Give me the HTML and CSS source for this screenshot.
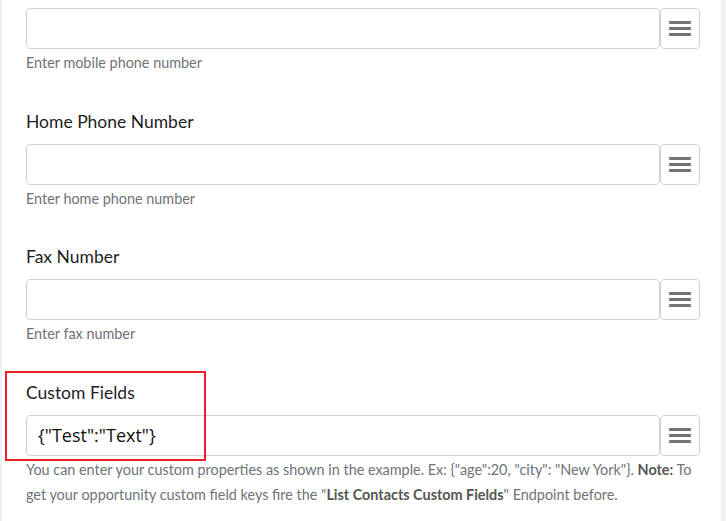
FILE: index.html
```
<!DOCTYPE html>
<html lang="en">
<head>
    <meta charset="UTF-8">
    <title>Contact Fields</title>
    <link rel="stylesheet" href="styles.css">
</head>
<body>
    <div class="page">
        <div class="panel">

            <!-- Mobile phone (label scrolled out of view) -->
            <div class="field first">
                <div class="input-row">
                    <input type="text" class="field-input">
                    <button class="menu-btn" type="button"><span></span><span></span><span></span></button>
                </div>
                <p class="help">Enter mobile phone number</p>
            </div>

            <div class="field">
                <label class="field-label">Home Phone Number</label>
                <div class="input-row">
                    <input type="text" class="field-input">
                    <button class="menu-btn" type="button"><span></span><span></span><span></span></button>
                </div>
                <p class="help">Enter home phone number</p>
            </div>

            <div class="field">
                <label class="field-label">Fax Number</label>
                <div class="input-row">
                    <input type="text" class="field-input">
                    <button class="menu-btn" type="button"><span></span><span></span><span></span></button>
                </div>
                <p class="help">Enter fax number</p>
            </div>

            <div class="field highlighted">
                <div class="highlight-box"></div>
                <label class="field-label">Custom Fields</label>
                <div class="input-row">
                    <input type="text" class="field-input filled" value='{"Test":"Text"}'>
                    <button class="menu-btn" type="button"><span></span><span></span><span></span></button>
                </div>
                <p class="help">You can enter your custom properties as shown in the example. Ex: {"age":20, "city": "New York"}. <b>Note:</b> To get your opportunity custom field keys fire the "<b>List Contacts Custom Fields</b>" Endpoint before.</p>
            </div>

        </div>
    </div>
</body>
</html>
```
FILE: styles.css
```
* {
    box-sizing: border-box;
    margin: 0;
    padding: 0;
}

body {
    background-color: #eef0f4;
    font-family: 'Lato', sans-serif;
    color: #1e1e1e;
    overflow: hidden;
}

.page {
    padding: 0 5px 0 2px;
}

.panel {
    background-color: #ffffff;
    height: 521px;
    padding: 8px 21px 0 24px;
}

.field {
    position: relative;
    margin-bottom: 34.5px;
}

.field-label {
    display: block;
    font-size: 17.5px;
    line-height: 24px;
    margin-bottom: 10px;
    color: #1e1e1e;
}

.input-row {
    display: flex;
    height: 41px;
}

.field-input {
    flex: 1;
    height: 41px;
    border: 1px solid #d0d5dd;
    border-radius: 4px;
    padding: 0 11px;
    font-size: 18px;
    color: #111;
    background: #fff;
    outline: none;
}

.field-input.filled {
    font-family: 'Open Sans', sans-serif;
}

.menu-btn {
    width: 40px;
    height: 41px;
    border: 1px solid #d0d5dd;
    border-radius: 4px;
    background: #fff;
    display: flex;
    flex-direction: column;
    align-items: center;
    justify-content: center;
    gap: 3px;
}

.menu-btn span {
    display: block;
    width: 22px;
    height: 3px;
    background-color: #737373;
    border-radius: 1px;
}

.help {
    font-size: 14.4px;
    line-height: 25px;
    margin-top: 1px;
    color: #6f7379;
}

.help b {
    color: #555;
}

.highlight-box {
    position: absolute;
    left: -21px;
    top: -10px;
    width: 201px;
    height: 90px;
    border: 2px solid #e8202a;
    pointer-events: none;
}
```
